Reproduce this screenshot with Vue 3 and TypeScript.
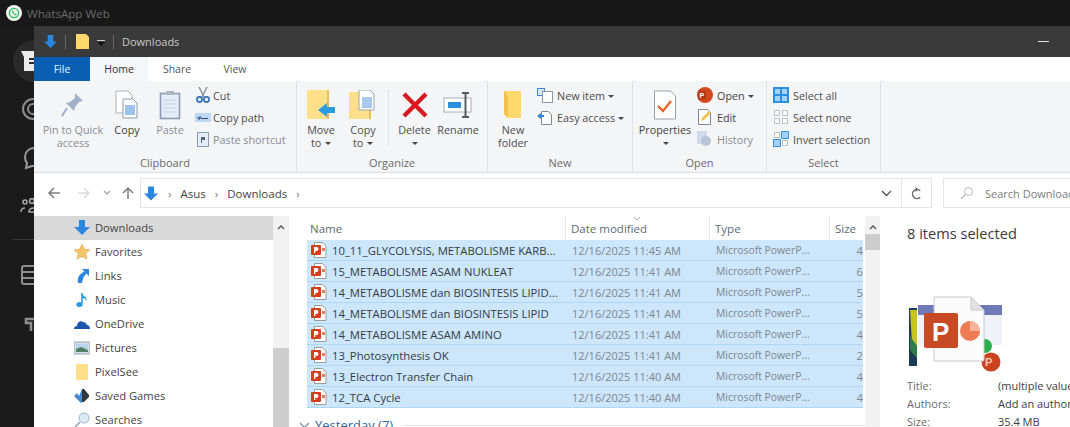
<script setup lang="ts">
const files = [
  { name: '10_11_GLYCOLYSIS, METABOLISME KARB...', date: '12/16/2025 11:45 AM', size: '4' },
  { name: '15_METABOLISME ASAM NUKLEAT', date: '12/16/2025 11:41 AM', size: '6' },
  { name: '14_METABOLISME dan BIOSINTESIS LIPID...', date: '12/16/2025 11:41 AM', size: '5' },
  { name: '14_METABOLISME dan BIOSINTESIS LIPID', date: '12/16/2025 11:41 AM', size: '5' },
  { name: '14_METABOLISME ASAM AMINO', date: '12/16/2025 11:41 AM', size: '4' },
  { name: '13_Photosynthesis OK', date: '12/16/2025 11:41 AM', size: '2' },
  { name: '13_Electron Transfer Chain', date: '12/16/2025 11:40 AM', size: '4' },
  { name: '12_TCA Cycle', date: '12/16/2025 11:40 AM', size: '4' },
];
</script>

<template>
  <div class="page">
    <header class="wa-bar">
      <svg class="wa-logo" width="16" height="16" viewBox="0 0 16 16">
        <circle cx="8" cy="8" r="8" fill="#f2f5f2" />
        <circle cx="8" cy="8" r="4.600" fill="none" stroke="#25c05c" stroke-width="1.400" />
        <path d="M6 5.800c0 2.400 1.600 4.200 4 4.600l.7-1.200-1.300-.8-.6.5c-.7-.3-1.200-.9-1.500-1.600l.5-.6-.7-1.400z" fill="#25c05c" />
      </svg>
      <span class="wa-title">WhatsApp Web</span>
    </header>
    <div class="desk">
      <aside class="wa-rail">
        <div class="rail-chip">
          <svg width="13" height="20" viewBox="0 0 13 20"><path d="M0 0h13v20H3V6z" fill="#ececec" /><path d="M8 7h5v2H8zM8 11h5v2H8z" fill="#2a2a2a" /></svg>
        </div>
        <svg class="r1" width="14" height="26" viewBox="0 0 14 26"><circle cx="13" cy="13" r="10" fill="none" stroke="#8c8c8c" stroke-width="2" /><circle cx="13" cy="13" r="5" fill="none" stroke="#8c8c8c" stroke-width="2" /></svg>
        <svg class="r2" width="14" height="24" viewBox="0 0 14 24"><path d="M14 2a9 9 0 0 0-9 9c0 3 1 5 2 6l-1 5 6-2h2" fill="none" stroke="#9a9a9a" stroke-width="2" /></svg>
        <svg class="r3" width="14" height="16" viewBox="0 0 14 16"><circle cx="5" cy="4" r="2" fill="none" stroke="#a5a5a5" stroke-width="1.600" /><circle cx="12" cy="3" r="2.400" fill="none" stroke="#a5a5a5" stroke-width="1.600" /><path d="M1 14c0-3 2-4 4-4M14 14H9c0-3 2-4 5-4" fill="none" stroke="#a5a5a5" stroke-width="1.600" /></svg>
        <div class="rail-line"></div>
        <svg class="r4" width="14" height="22" viewBox="0 0 14 22"><path d="M14 2H4a2 2 0 0 0-2 2v14a2 2 0 0 0 2 2h10M2 8h12M2 14h12" fill="none" stroke="#8f8f8f" stroke-width="2" /></svg>
        <svg class="r5" width="10" height="18" viewBox="0 0 10 18"><path d="M10 3H2v4h5v8" fill="none" stroke="#8f8f8f" stroke-width="2.600" /></svg>
      </aside>

      <section class="win">
        <div class="titlebar">
          <svg class="tb-arrow" width="15" height="15" viewBox="0 0 16 16"><path d="M5 1h6v7h4l-7 7-7-7h4z" fill="#2b87dd" /></svg>
          <i class="tb-sep"></i>
          <svg width="14" height="15" viewBox="0 0 14 15"><path d="M0 0h10l3 3v12H0z" fill="#ffd76a" /></svg>
          <span class="tb-menu"></span>
          <i class="tb-sep"></i>
          <span class="tb-text">Downloads</span>
          <span class="tb-min"></span>
        </div>

        <nav class="tabs">
          <span class="tab file">File</span>
          <span class="tab active">Home</span>
          <span class="tab">Share</span>
          <span class="tab">View</span>
        </nav>

        <div class="ribbon">
          <div class="group g-clip">
            <div class="tools">
              <div class="big dim w-pin">
                <svg width="26" height="30" viewBox="0 0 26 30"><path d="M15 3l8 8-4 1-4 5-1 4-8-8 4-1 5-4z" fill="#9fb0c8" /><path d="M7 18l-5 8" stroke="#9fb0c8" stroke-width="2" /></svg>
                <span>Pin to Quick<br />access</span>
              </div>
              <div class="big w-copy">
                <svg width="26" height="30" viewBox="0 0 26 30"><path d="M2 1h12l4 4v18H2z" fill="#fff" stroke="#aab0b8" /><path d="M9 9h10l4 4v15H9z" fill="#fff" stroke="#8a99ad" /><path d="M11 15h10v10H11z" fill="#9dc3ec" /></svg>
                <span class="strong">Copy</span>
              </div>
              <div class="big dim w-paste">
                <svg width="22" height="30" viewBox="0 0 22 30"><rect x="1.500" y="3.500" width="19" height="25" fill="#e4edf7" stroke="#8b9bb0" stroke-width="1.600" /><rect x="7" y="1" width="8" height="4" fill="#aeb8c5" /><path d="M5 10h12M5 14h12M5 18h12M5 22h12" stroke="#c2d2e6" /></svg>
                <span>Paste</span>
              </div>
              <div class="stack clip-stack">
                <div class="line">
                  <svg width="16" height="16" viewBox="0 0 16 16"><path d="M4 0l5 10M12 0L7 10" stroke="#8a8f96" stroke-width="1.400" /><circle cx="4.500" cy="12.500" r="2.600" fill="none" stroke="#2d6fb8" stroke-width="1.600" /><circle cx="11.500" cy="12.500" r="2.600" fill="none" stroke="#2d6fb8" stroke-width="1.600" /></svg>
                  <span>Cut</span>
                </div>
                <div class="line">
                  <svg width="16" height="16" viewBox="0 0 16 16"><rect x="0" y="4" width="16" height="9" fill="#bcd8f4" /><path d="M2 8.500h1l1 2 1-3 1 2h7" fill="none" stroke="#33506f" /></svg>
                  <span>Copy path</span>
                </div>
                <div class="line dim">
                  <svg width="16" height="16" viewBox="0 0 16 16"><rect x="2.500" y="1.500" width="11" height="14" fill="#e4edf7" stroke="#8b9bb0" /><path d="M6 6h4v3H7v3H6z" fill="#56657a" /></svg>
                  <span>Paste shortcut</span>
                </div>
              </div>
            </div>
            <div class="glabel">Clipboard</div>
          </div>

          <div class="group g-org">
            <div class="tools">
              <div class="big w-move">
                <svg width="28" height="30" viewBox="0 0 28 30"><path d="M0 0h21v29H0z" fill="#ffe08a" /><path d="M21 0l0 29" stroke="#e8bf57" stroke-width="2" /><path d="M11 20l9-7v4h8v6h-8v4z" fill="#2b9be0" /></svg>
                <span>Move<br />to <b class="caret"></b></span>
              </div>
              <div class="big w-copyto">
                <svg width="28" height="30" viewBox="0 0 28 30"><path d="M0 2h22v27H0z" fill="#ffe08a" /><path d="M21 2v27" stroke="#e8bf57" stroke-width="2" /><path d="M10 0h11l4 4v16H10z" fill="#fff" stroke="#9aa6b5" /><path d="M13 7h10v11H13z" fill="#a8c9ec" /></svg>
                <span>Copy<br />to <b class="caret"></b></span>
              </div>
              <i class="vsep"></i>
              <div class="big w-del">
                <svg width="28" height="28" viewBox="0 0 28 28"><path d="M3 3l22 22M25 3L3 25" stroke="#d7191f" stroke-width="4.400" /></svg>
                <span>Delete<br /><b class="caret"></b></span>
              </div>
              <div class="big w-ren">
                <svg width="30" height="28" viewBox="0 0 30 28"><rect x="1" y="7" width="27" height="14" fill="#fff" stroke="#a6adb5" /><rect x="5" y="11" width="13" height="6" fill="#2b8fdd" /><path d="M19 2h7M22.500 2v24M19 26h7" stroke="#555c64" stroke-width="2" fill="none" /></svg>
                <span>Rename</span>
              </div>
            </div>
            <div class="glabel">Organize</div>
          </div>

          <div class="group g-new">
            <div class="tools">
              <div class="big w-folder">
                <svg width="20" height="30" viewBox="0 0 20 30"><path d="M1 1h17v27H5L1 24z" fill="#ffd76a" /><path d="M1 1v23l4 4V6z" fill="#f2c14d" /></svg>
                <span>New<br />folder</span>
              </div>
              <div class="stack new-stack">
                <div class="line">
                  <svg width="16" height="16" viewBox="0 0 16 16"><rect x=".5" y="1.500" width="7" height="7" fill="#d7e9fa" stroke="#3f88c9" /><rect x="5.500" y="4.500" width="10" height="11" fill="#fff" stroke="#8c97a6" /></svg>
                  <span>New item <b class="caret"></b></span>
                </div>
                <div class="line">
                  <svg width="16" height="16" viewBox="0 0 16 16"><path d="M4.500 2.500h7l3 3v10h-10z" fill="#fff" stroke="#7e8894" /><path d="M0 7l4-3v2h3v2H4v2z" fill="#2b87dd" /></svg>
                  <span>Easy access <b class="caret"></b></span>
                </div>
              </div>
            </div>
            <div class="glabel">New</div>
          </div>

          <div class="group g-open">
            <div class="tools">
              <div class="big w-prop">
                <svg width="24" height="30" viewBox="0 0 24 30"><path d="M1.500 1h16l5 5v23h-21z" fill="#fff" stroke="#9aa0a8" /><path d="M5 16l5 5 8-10" fill="none" stroke="#e5652a" stroke-width="2.400" /></svg>
                <span class="strong">Properties<br /><b class="caret"></b></span>
              </div>
              <div class="stack open-stack">
                <div class="line">
                  <svg width="16" height="16" viewBox="0 0 16 16"><circle cx="8" cy="8" r="8" fill="#d4481f" /><rect x="1" y="3.500" width="8" height="9" rx="1" fill="#b33a14" /><text x="2.500" y="11" font-size="7" font-weight="700" fill="#fff" font-family="Liberation Sans">P</text></svg>
                  <span class="strong">Open <b class="caret"></b></span>
                </div>
                <div class="line">
                  <svg width="16" height="16" viewBox="0 0 16 16"><path d="M1.500.500h9l3 3v12h-12z" fill="#fff" stroke="#7e8894" /><path d="M4 12l1-3 7-7 2 2-7 7z" fill="#f2c14d" /></svg>
                  <span class="strong">Edit</span>
                </div>
                <div class="line dim">
                  <svg width="16" height="16" viewBox="0 0 16 16"><rect x="0" y="0" width="10" height="13" fill="#cfdaea" /><circle cx="9" cy="10" r="5" fill="#b6c4d6" /></svg>
                  <span>History</span>
                </div>
              </div>
            </div>
            <div class="glabel">Open</div>
          </div>

          <div class="group g-sel">
            <div class="tools">
              <div class="stack sel-stack">
                <div class="line">
                  <svg width="16" height="16" viewBox="0 0 16 16"><rect width="16" height="16" fill="#2c8fe0" /><path d="M2 2h5v5H2zM9 2h5v5H9zM2 9h5v5H2zM9 9h5v5H9z" fill="#a7d2f6" /></svg>
                  <span>Select all</span>
                </div>
                <div class="line">
                  <svg width="16" height="16" viewBox="0 0 16 16"><path d="M1.500 1.500h5v5h-5zM9.500 1.500h5v5h-5zM1.500 9.500h5v5h-5zM9.500 9.500h5v5h-5z" fill="#fff" stroke="#b8bcc2" /></svg>
                  <span>Select none</span>
                </div>
                <div class="line">
                  <svg width="16" height="16" viewBox="0 0 16 16"><path d="M1.500 1.500h5v5h-5zM9.500 9.500h5v5h-5z" fill="#fff" stroke="#b8bcc2" /><path d="M8.500.500h7v7h-7zM.500 8.500h7v7h-7z" fill="#a7d2f6" stroke="#2c8fe0" /></svg>
                  <span>Invert selection</span>
                </div>
              </div>
            </div>
            <div class="glabel">Select</div>
          </div>
        </div>

        <div class="addr-row">
          <svg class="nav-ic" width="14" height="14" viewBox="0 0 14 14"><path d="M13 7H2M7 2L2 7l5 5" fill="none" stroke="#7c7c7c" stroke-width="1.500" /></svg>
          <svg class="nav-ic fwd" width="14" height="14" viewBox="0 0 14 14"><path d="M1 7h11M7 2l5 5-5 5" fill="none" stroke="#dcdcdc" stroke-width="1.500" /></svg>
          <svg class="nav-ic dn" width="8" height="6" viewBox="0 0 8 6"><path d="M1 1l3 3 3-3" fill="none" stroke="#9a9a9a" stroke-width="1.200" /></svg>
          <svg class="nav-ic up" width="14" height="14" viewBox="0 0 14 14"><path d="M7 13V2M2 7l5-5 5 5" fill="none" stroke="#7c7c7c" stroke-width="1.500" /></svg>
          <div class="addr">
            <svg width="16" height="17" viewBox="0 0 16 16"><path d="M5 1h6v7h4l-7 7-7-7h4z" fill="#2b87dd" /></svg>
            <span class="chev">›</span><span>Asus</span><span class="chev">›</span><span>Downloads</span><span class="chev">›</span>
            <span class="spacer"></span>
            <svg class="addr-dd" width="11" height="7" viewBox="0 0 11 7"><path d="M1 1l4.500 4.500L10 1" fill="none" stroke="#555" stroke-width="1.400" /></svg>
            <span class="refresh">
              <svg width="12" height="13" viewBox="0 0 12 13"><path d="M6 2.500a4.500 4.500 0 1 0 4.500 4.500" fill="none" stroke="#666" stroke-width="1.400" transform="rotate(45 6 7)" /><path d="M4.500 0l3 2.500-3 2.500z" fill="#666" /></svg>
            </span>
          </div>
          <div class="search">
            <svg width="14" height="14" viewBox="0 0 14 14"><circle cx="8.500" cy="5.500" r="4" fill="none" stroke="#bbb" /><path d="M5.500 8.500L1 13" stroke="#bbb" stroke-width="1.400" /></svg>
            <span>Search Downloads</span>
          </div>
        </div>

        <div class="content">
          <div class="tree">
            <div class="tree-list">
              <div class="node selected"><svg width="16" height="16" viewBox="0 0 16 16"><path d="M5 0h6v7h5l-8 8-8-8h5z" fill="#2b87dd" /></svg><span>Downloads</span></div>
              <div class="node"><svg width="16" height="16" viewBox="0 0 16 16"><path d="M8 0l2.400 5.200 5.600.6-4.200 3.800 1.200 5.600L8 12.400l-5 2.800 1.200-5.600L0 5.800l5.600-.6z" fill="#f6c667" stroke="#d99b3a" stroke-width=".5" /></svg><span>Favorites</span></div>
              <div class="node"><svg width="16" height="16" viewBox="0 0 16 16"><path d="M8 1h7v7l-2.500-2.500C10 8 9 10 8 15H4C3 10 5 6 10.500 3.500z" fill="#2b87dd" /></svg><span>Links</span></div>
              <div class="node"><svg width="16" height="16" viewBox="0 0 16 16"><path d="M8 1v10.500" stroke="#2b9be0" stroke-width="1.600" /><ellipse cx="5.500" cy="12.500" rx="3.200" ry="2.500" fill="#2b9be0" /><path d="M8 1c0 3 5 3 5 8-1-2-3-3-5-3z" fill="#2b9be0" /></svg><span>Music</span></div>
              <div class="node"><svg width="16" height="16" viewBox="0 0 16 16"><path d="M0 13c0-2 1-3 3-3 0-3 3-6 6-4 2 0 3 1 4 3 2 0 3 2 3 4z" fill="#1c56b0" /></svg><span>OneDrive</span></div>
              <div class="node"><svg width="16" height="16" viewBox="0 0 16 16"><rect x="0" y="2" width="16" height="12" fill="#d6dde6" stroke="#9aa5b1" /><path d="M2 4h12v5H2z" fill="#b9d3ea" /><path d="M2 9l5-2 7 3v2H2z" fill="#4f8062" /></svg><span>Pictures</span></div>
              <div class="node"><svg width="14" height="16" viewBox="0 0 14 16"><path d="M1 0h12v16H1z" fill="#ffe08a" /></svg><span>PixelSee</span></div>
              <div class="node"><svg width="16" height="16" viewBox="0 0 16 16"><path d="M0 8l3-3 2 3 3-7 2 2v10l-3 2-2-2z" fill="#4a89c7" /><path d="M8 1h2l5 6v2l-5 5H8z" fill="#33373b" /></svg><span>Saved Games</span></div>
              <div class="node"><svg width="16" height="16" viewBox="0 0 16 16"><circle cx="10" cy="6" r="5" fill="#dcebf8" stroke="#9fb4c8" /><path d="M6 10L1 15" stroke="#9aa3ac" stroke-width="1.600" /></svg><span>Searches</span></div>
            </div>
            <div class="vbar">
              <svg class="sb-up" width="8" height="6" viewBox="0 0 8 6"><path d="M1 5l3-3 3 3" fill="none" stroke="#555" stroke-width="1.400" /></svg>
              <div class="thumb left-thumb"></div>
            </div>
          </div>

          <div class="files">
            <div class="thead">
              <span class="c-name">Name</span>
              <span class="c-date">Date modified<svg class="sort" width="8" height="5" viewBox="0 0 8 5"><path d="M1 1l3 3 3-3" fill="none" stroke="#a8a8a8" /></svg></span>
              <span class="c-type">Type</span>
              <span class="c-size">Size</span>
            </div>
            <div class="row" v-for="f in files" :key="f.name">
              <svg class="ficon" width="16" height="16" viewBox="0 0 16 16"><path d="M3.500.500h8l3.500 3.500v11.500H3.500z" fill="#fff" stroke="#9b9b9b" /><rect x="0" y="3" width="10" height="10" rx="1" fill="#d2401c" /><path d="M3 11V5h2.500a2 2 0 0 1 0 4H4.300v2z" fill="#fff" /><path d="M11 6h3v3h-3z" fill="#ed7b54" /></svg>
              <span class="r-name">{{ f.name }}</span>
              <span class="r-date">{{ f.date }}</span>
              <span class="r-type">Microsoft PowerP...</span>
              <span class="r-size">{{ f.size }}</span>
            </div>
            <div class="group-head">
              <svg width="11" height="7" viewBox="0 0 11 7"><path d="M1 1l4.500 4.500L10 1" fill="none" stroke="#7a8a99" stroke-width="1.200" /></svg>
              <span>Yesterday (7)</span>
              <i></i>
            </div>
          </div>

          <div class="vbar files-bar">
            <svg class="sb-up" width="8" height="6" viewBox="0 0 8 6"><path d="M1 5l3-3 3 3" fill="none" stroke="#555" stroke-width="1.400" /></svg>
            <div class="thumb right-thumb"></div>
          </div>

          <aside class="details">
            <div class="d-title">8 items selected</div>
            <svg class="d-thumb" width="96" height="76" viewBox="0 0 96 76">
              <rect x="2" y="12" width="8" height="58" fill="#1b3a55" />
              <path d="M3 14h7v44l-5-10z" fill="#c8c41e" />
              <path d="M3 40l7 10v12l-7-8z" fill="#2d7d4a" />
              <rect x="11" y="9" width="84" height="10" fill="#6f79b8" />
              <rect x="11" y="19" width="84" height="30" fill="#f1f2f7" />
              <circle cx="78" cy="50" r="7" fill="#2fae4d" />
              <circle cx="84" cy="66" r="9.500" fill="#c9431f" />
              <text x="78" y="70" font-size="11" font-weight="700" fill="#f4c9b6" font-family="Liberation Sans">P</text>
              <path d="M27 1h37l13 13v50a1 1 0 0 1-1 1H27z" fill="#fbfbfb" stroke="#c8c8c8" />
              <path d="M64 1v13h13z" fill="#e2e2e2" stroke="#c8c8c8" />
              <rect x="17" y="17" width="34" height="35" rx="2" fill="#c84a24" />
              <text x="25" y="45" font-size="26" font-weight="700" fill="#fff" font-family="Liberation Sans">P</text>
              <circle cx="63" cy="35" r="10" fill="#ee7b54" />
              <path d="M63 25a10 10 0 0 1 10 10H63z" fill="#f7b49a" />
            </svg>
            <dl class="props">
              <dt>Title:</dt><dd>(multiple values)</dd>
              <dt>Authors:</dt><dd>Add an author</dd>
              <dt>Size:</dt><dd>35.4 MB</dd>
            </dl>
          </aside>
        </div>
      </section>
    </div>
  </div>
</template>

<style>
html, body { margin: 0; background: #1a1a1a; overflow: hidden; }
</style>

<style scoped>
.page { width: 1070px; height: 427px; overflow: hidden; background: #1b1b1b; font-family: "Open Sans", "Liberation Sans", sans-serif; display: flex; flex-direction: column; color: #3b3b3b; }
.wa-bar { height: 26px; flex: none; display: flex; align-items: center; gap: 5px; padding-left: 6px; box-sizing: border-box; background: #181818; }
.wa-title { font-size: 11.600px; color: #6a6a6a; }
.desk { flex: 1; display: flex; min-height: 0; }
.wa-rail { width: 34px; flex: none; display: flex; flex-direction: column; align-items: flex-end; }
.rail-chip { width: 21px; height: 42px; margin-top: 14px; background: #2a2a2a; border-radius: 21px 0 0 21px; display: flex; align-items: center; justify-content: flex-end; overflow: hidden; flex: none; }
.wa-rail svg { flex: none; }
.r1 { margin-top: 14px; }
.r2 { margin-top: 24px; }
.r3 { margin-top: 28px; }
.rail-line { width: 21px; height: 1px; background: #3a3a3a; margin-top: 25px; flex: none; }
.r4 { margin-top: 24px; }
.r5 { margin-top: 30px; }

.win { width: 1036px; flex: none; display: flex; flex-direction: column; min-width: 0; background: #fff; overflow: hidden; }
.titlebar { height: 31px; flex: none; background: #3a3a3a; display: flex; align-items: center; padding-left: 9px; box-sizing: border-box; color: #c9c9c9; font-size: 11px; }
.tb-arrow { margin-right: 7px; }
.tb-sep { width: 1px; height: 14px; background: #666; margin-right: 10px; flex: none; }
.tb-menu { width: 0; height: 0; border: 4px solid transparent; border-top: 4px solid #111; border-bottom: 0; margin: 4px 8px 0 7px; position: relative; }
.tb-menu::before { content: ""; position: absolute; left: -4px; top: -6px; width: 8px; height: 1px; background: #ccc; }
.tb-text { margin-left: -2px; }
.tb-min { width: 11px; height: 1px; background: #e0e0e0; margin-left: auto; margin-right: 21px; }

.tabs { height: 24px; flex: none; display: flex; background: #fff; font-size: 10.500px; line-height: 24px; color: #555; }
.tab { text-align: center; width: 58px; }
.tab.file { width: 56px; background: #0a5fb4; color: #e8f1fa; }
.tab.active { background: #f5f6f7; color: #333; }

.ribbon { height: 92px; flex: none; display: flex; background: #f4f5f7; border-bottom: 1px solid #dcdcdc; box-sizing: border-box; font-size: 10.800px; color: #4c4c4c; }
.group { display: flex; flex-direction: column; border-right: 1px solid #e0e1e3; box-sizing: border-box; flex: none; }
.tools { flex: 1; display: flex; padding-top: 5px; min-height: 0; }
.glabel { height: 18px; text-align: center; line-height: 17px; color: #6b6b6b; font-size: 11px; }
.g-clip { width: 263px; }
.g-org { width: 191px; }
.g-new { width: 145px; }
.g-open { width: 134px; }
.g-sel { width: 114px; }
.big { display: flex; flex-direction: column; align-items: center; text-align: center; line-height: 13px; flex: none; margin-top: 4px; }
.big svg { height: 30px; margin-bottom: 3px; flex: none; }
.big span { white-space: nowrap; }
.big b.caret { margin-left: 1px; }
.w-pin { width: 78px; }
.w-copy { width: 30px; }
.w-paste { width: 50px; margin-left: 3px; }
.w-move { width: 42px; margin-left: 3px; }
.w-copyto { width: 42px; }
.w-del { width: 43px; }
.w-ren { width: 44px; }
.w-folder { width: 46px; margin-left: 2px; }
.w-prop { width: 60px; margin-left: 2px; }
.vsep { width: 1px; height: 56px; background: #e0e1e3; margin: 3px 4px 0 4px; flex: none; }
.dim { color: #868d96; }
.strong { color: #3f3f3f; }
.stack { display: flex; flex-direction: column; gap: 4px; flex: none; }
.line { height: 18px; display: flex; align-items: center; gap: 4px; white-space: nowrap; }
.line svg { flex: none; }
.clip-stack .line { gap: 2px; }
.new-stack { margin-left: 1px; }
.open-stack { margin-left: 2px; }
.sel-stack { margin-left: 6px; }
.caret { display: inline-block; border: 3px solid transparent; border-top: 3px solid #444; border-bottom: 0; vertical-align: 2px; }

.addr-row { height: 43px; flex: none; display: flex; align-items: center; padding-bottom: 3px; background: #fff; box-sizing: border-box; }
.nav-ic { flex: none; margin-left: 13px; }
.nav-ic.fwd { margin-left: 16px; }
.nav-ic.dn { margin-left: 12px; }
.nav-ic.up { margin-left: 10px; }
.addr { width: 792px; height: 30px; margin-left: 5px; border: 1px solid #e4e4e4; box-sizing: border-box; display: flex; align-items: center; padding-left: 2px; font-size: 11.500px; color: #444; flex: none; }
.chev { color: #777; margin: 0 9px; }
.spacer { flex: 1; }
.addr-dd { margin-right: 9px; }
.refresh { width: 30px; height: 28px; border-left: 1px solid #e4e4e4; display: flex; align-items: center; justify-content: center; box-sizing: border-box; }
.search { flex: none; width: 160px; height: 30px; margin-left: 11px; border: 1px solid #e4e4e4; border-right: 0; box-sizing: border-box; display: flex; align-items: center; gap: 11px; padding-left: 16px; font-size: 11px; color: #7c7c7c; white-space: nowrap; }

.content { flex: 1; min-height: 0; display: flex; background: #fff; font-size: 11.200px; }
.tree { width: 255px; flex: none; display: flex; }
.tree-list { width: 239px; flex: none; }
.node { height: 24px; display: flex; align-items: center; gap: 5px; padding-left: 40px; box-sizing: border-box; color: #444; white-space: nowrap; }
.node svg { flex: none; width: 16px; }
.node span { margin-top: -2px; }
.node.selected { background: #d9d9d9; }
.vbar { width: 16px; flex: none; background: #f2f2f2; display: flex; flex-direction: column; align-items: center; }
.sb-up { margin-top: 8px; flex: none; }
.thumb { background: #cdcdcd; width: 100%; }
.left-thumb { margin-top: 118px; flex: 1; }
.files { width: 576px; flex: none; padding-left: 18px; box-sizing: border-box; overflow: hidden; }
.thead { height: 24px; display: flex; align-items: center; color: #5e6a76; font-size: 11.500px; }
.c-name { width: 259px; padding-left: 3px; box-sizing: border-box; border-right: 1px solid #e5e5e5; height: 100%; display: flex; align-items: center; flex: none; }
.c-date { width: 144px; padding-left: 5px; box-sizing: border-box; border-right: 1px solid #e5e5e5; height: 100%; display: flex; align-items: center; position: relative; flex: none; }
.sort { position: absolute; left: 67px; top: 0; }
.c-type { width: 120px; padding-left: 5px; box-sizing: border-box; border-right: 1px solid #e5e5e5; height: 100%; display: flex; align-items: center; flex: none; }
.c-size { flex: 1; padding-left: 5px; display: flex; align-items: center; }
.row { height: 21px; display: flex; align-items: center; background: #cce6fb; border-bottom: 1px solid #aed6f7; box-sizing: border-box; white-space: nowrap; width: 556px; color: #333c46; font-size: 11.300px; }
.ficon { flex: none; margin-left: 4px; margin-right: 5px; }
.r-name { width: 240px; flex: none; overflow: hidden; }
.r-date { width: 144px; flex: none; color: #7d8690; font-size: 11px; }
.r-type { width: 120px; flex: none; color: #7d8690; font-size: 10.400px; }
.r-size { flex: 1; text-align: right; color: #7d8690; overflow: hidden; }
.group-head { display: flex; align-items: center; gap: 5px; height: 20px; margin: 7px 0 0 -8px; color: #336699; font-size: 13px; white-space: nowrap; }
.group-head svg { flex: none; }
.group-head i { flex: 1; height: 1px; background: #e5e5e5; margin-left: 4px; }
.files-bar { width: 15px; }
.files-bar .thumb { margin-top: 4px; height: 16px; flex: none; }
.details { flex: 1; min-width: 0; padding: 7px 0 0 27px; box-sizing: border-box; white-space: nowrap; overflow: hidden; }
.d-title { font-size: 14.600px; color: #3b3b3b; line-height: 20px; }
.d-thumb { display: block; margin-top: 53px; }
.props { display: grid; grid-template-columns: 91px auto; margin: 5px 0 0; font-size: 11px; line-height: 18px; }
.props dt { color: #6d6d6d; }
.props dd { margin: 0; color: #3b3b3b; }
</style>
